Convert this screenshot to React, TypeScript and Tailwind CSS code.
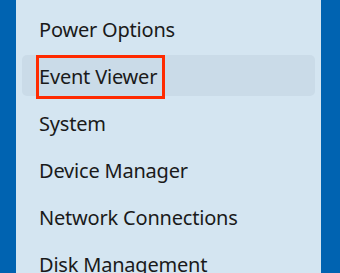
import React from 'react';

const ITEMS = ['Power Options', 'Event Viewer', 'System', 'Device Manager', 'Network Connections', 'Disk Management'];

export default function App() {
  return (
    <div className="w-[340px] h-[273px] bg-[#0063b1] overflow-hidden flex">
      <div className="ml-[16px] w-[305px] h-full bg-[#d4e5f1] px-[6px] pt-[8px] flex flex-col gap-[6px]">
        {ITEMS.map((label, i) => (
          <div
            key={label}
            className={`relative shrink-0 h-[41px] rounded-[5px] pl-[17px] flex items-center text-[20px] tracking-[-0.2px] text-[#1a1a1a] font-['Noto_Sans',sans-serif] ${i === 1 ? 'bg-[#cadbe8]' : ''}`}
          >
            <span className="leading-none pt-[2px]">{label}</span>
            {i === 1 && (
              <div className="absolute left-[14px] top-0 w-[129px] h-[44px] border-[3px] border-[#ff2a00]" />
            )}
          </div>
        ))}
      </div>
    </div>
  );
}
